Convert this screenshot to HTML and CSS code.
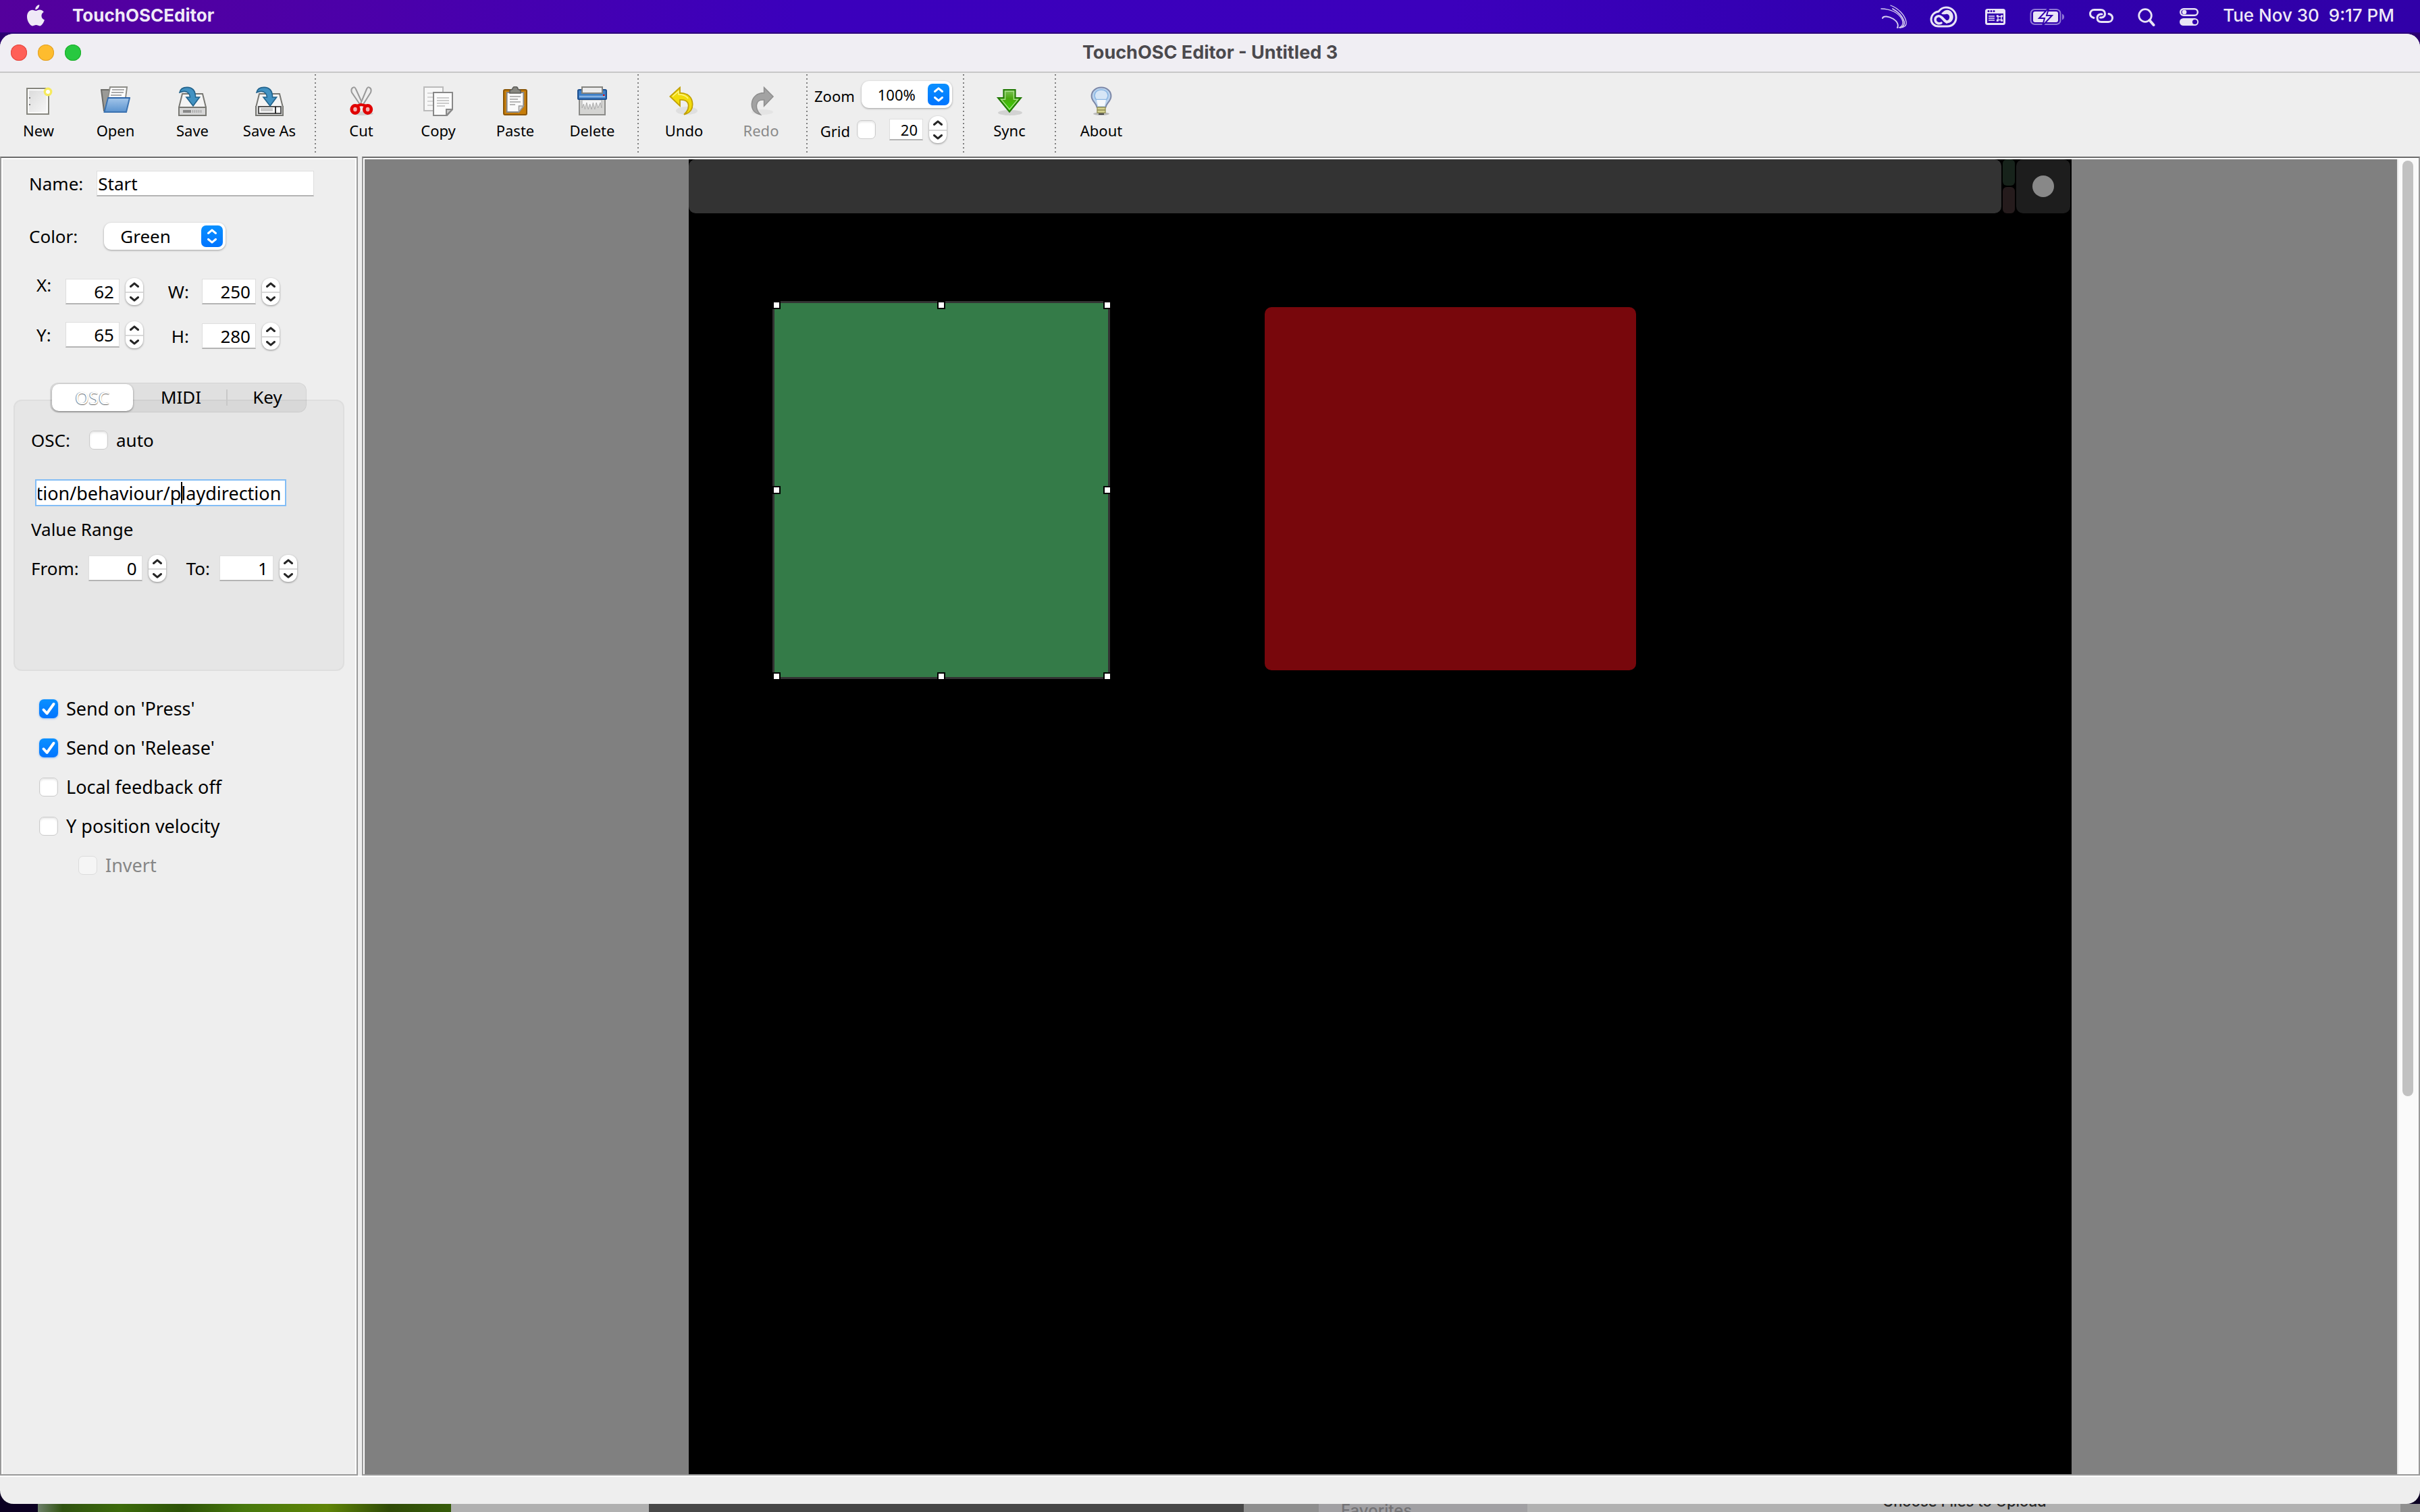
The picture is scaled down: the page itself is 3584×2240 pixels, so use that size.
FILE: index.html
```html
<!DOCTYPE html>
<html lang="en">

<head>
  <meta charset="UTF-8">
  <meta name="viewport" content="width=device-width, initial-scale=1.0">
  <title>TouchOSC Editor - Untitled 3</title>
  <link rel="stylesheet" href="styles.css">
</head>

<body>
  <svg class="defs">
    <symbol id="up" viewBox="0 0 14 8"><path d="M1.5 6.5L7 1.8l5.500 4.700" fill="none" stroke="currentColor" stroke-width="3" stroke-linecap="round" stroke-linejoin="round"/></symbol>
    <symbol id="down" viewBox="0 0 14 8"><path d="M1.500 1.500L7 6.200l5.500-4.700" fill="none" stroke="currentColor" stroke-width="3" stroke-linecap="round" stroke-linejoin="round"/></symbol>
    <linearGradient id="gBlue" x1="0" y1="0" x2="0" y2="1"><stop offset="0" stop-color="#a3c6ea"/><stop offset="1" stop-color="#5b93cf"/></linearGradient>
    <linearGradient id="gPage" x1="0" y1="0" x2="1" y2="1"><stop offset="0" stop-color="#dcdcdc"/><stop offset="1" stop-color="#f6f6f6"/></linearGradient>
    <linearGradient id="gGreen" x1="0" y1="0" x2="0" y2="1"><stop offset="0" stop-color="#7fc25a"/><stop offset=".4" stop-color="#49a80f"/><stop offset="1" stop-color="#35dc00"/></linearGradient>
  </svg>

  <!-- menu bar -->
  <header class="menubar">
    <svg class="apple" width="26" height="32" viewBox="0 0 26 32">
      <path fill="#efe9f7" d="M18.300 0c.2 3.800-2.900 7.200-6 7.300C12 3.800 15.200.4 18.300 0zM13.200 9c1.200 0 3-1.400 5.600-1.400 2.200 0 4.500 1.100 6 3.200-5 3-4.200 9.700 1.100 11.700-1.100 3.600-4 8.900-7 8.900-2 0-2.900-1.300-5.400-1.300s-3.400 1.300-5.300 1.300C4.700 31.400 0 24.500 0 17.800 0 11.300 4 7.700 7.800 7.700c2.400 0 4 1.300 5.400 1.300z"/>
    </svg>
    <strong class="app-name">TouchOSCEditor</strong>
    <div class="status">
      <svg class="swoosh" width="34" height="36" viewBox="0 0 34 36" fill="none" stroke="#d9d0f2" stroke-linecap="round">
        <path stroke-width="1.300" d="M0 6c14 0 26 6 31 16 2 5 1 10-5 12"/>
        <path stroke-width="1.300" d="M14 1c11 4 21 14 23 24 1 6-3 9-9 9"/>
        <path stroke-width="1.800" d="M17 6c9 5 15 12 17 19 1 5-2 8-6 9"/>
        <path stroke-width="2" d="M2 20c1-4 9-3 16 1 6 4 8 9 6 13"/>
      </svg>
      <svg width="48" height="36" viewBox="0 0 48 36" fill="none" stroke="#e9e4f6">
        <path stroke-width="3" d="M15 10C18 6 22 4 26 4c9 0 15 7 15 15 0 7-5 13-13 13H15C8 32 4 27 4 22c0-6 4-11 11-12z"/>
        <path fill="#e9e4f6" stroke="none" d="M19 13c4-5 8-6 11-5 9 3 9 17 0 19-4 1-7-1-9-4l-4-4c1-3 4-2 6 1 2 4 5 4 7 2 3-4 0-9-4-8-3 0-5 1-7-1z"/>
        <path stroke-width="3.500" stroke-linecap="round" d="M19 27c-4 2-9 0-9-5s6-7 10-3l7 7"/>
      </svg>
      <svg width="30" height="36" viewBox="0 0 30 36">
        <rect y="6" width="30" height="24" rx="3.500" fill="#e9e4f6"/>
        <g fill="#3200ae"><circle cx="5" cy="9.500" r="1.500"/><circle cx="9" cy="9.500" r="1.500"/><circle cx="13" cy="9.500" r="1.500"/><path d="M3 13h24v14H3z"/></g>
        <path d="M5 17h9M5 20h9M5 23h9" stroke="#e9e4f6" stroke-width="1.600"/>
        <path d="M19 17.500h5v5h-5zM19 17.500h-1.500V16H19zM24 17.500h1.500V16H24zM19 22.500h-1.500V24H19zM24 22.500h1.500V24H24z" fill="none" stroke="#e9e4f6" stroke-width="1.400"/>
      </svg>
      <svg width="52" height="36" viewBox="0 0 52 36">
        <rect x="1.500" y="7" width="44" height="22" rx="6" fill="none" stroke="#8f78d6" stroke-width="2"/>
        <path d="M48 13.500c4 1 4 8 0 9z" fill="#8f78d6"/>
        <rect x="5" y="10" width="37" height="16" rx="3" fill="#e9e4f6"/>
        <path d="M27 6L14 20h8l-3 11 14-15h-8l3-10z" fill="#e9e4f6" stroke="#3200ae" stroke-width="2"/>
      </svg>
      <svg width="36" height="36" viewBox="0 0 36 36" fill="none" stroke="#e9e4f6" stroke-width="3" stroke-linecap="round">
        <path d="M7 19.500C3 18.500 1.500 16 1.500 13.500c0-3.500 2.500-6 6-6H17c4 0 6.500 2.500 6.500 6 0 3-2 5-5 5.500h-2"/>
        <path d="M29 13.500c4 1 5.500 3.500 5.500 6 0 3.500-2.500 6-6 6H18c-4 0-6-2.500-6-6 0-3 2-5 5-5.500h2" />
      </svg>
      <svg width="26" height="36" viewBox="0 0 26 36" fill="none" stroke="#e9e4f6" stroke-linecap="round">
        <circle cx="11" cy="16" r="9.300" stroke-width="2.800"/><path d="M17.500 23l6 7" stroke-width="4"/>
      </svg>
      <svg width="28" height="36" viewBox="0 0 28 36">
        <rect x="1.200" y="6.200" width="25.600" height="9.600" rx="4.800" fill="none" stroke="#e9e4f6" stroke-width="2.400"/>
        <circle cx="7" cy="11" r="3.300" fill="#e9e4f6"/>
        <rect y="20" width="28" height="11" rx="5.500" fill="#e9e4f6"/><circle cx="22.500" cy="25.500" r="3.600" fill="#3200ae"/>
      </svg>
      <time class="clock">Tue Nov 30&nbsp; 9:17 PM</time>
    </div>
  </header>

  <main class="window">
    <div class="titlebar">
      <div class="lights">
        <button class="light red" aria-label="Close"></button>
        <button class="light yellow" aria-label="Minimize"></button>
        <button class="light green" aria-label="Zoom window"></button>
      </div>
      <h1 class="title">TouchOSC Editor - Untitled 3</h1>
    </div>

    <!-- toolbar -->
    <div class="toolbar">
      <button class="tool">
        <svg class="icon" viewBox="0 0 22 22"><path d="M2.500 1.500h16v19h-16z" fill="#fff" stroke="#86867e"/><path d="M4 3h13v16H4z" fill="url(#gPage)"/><path d="M4.500 8v1M4.500 13v1" stroke="#777"/><circle cx="18" cy="4" r="3.200" fill="#f6ea5e"/><circle cx="18" cy="4" r="1.500" fill="#fff"/></svg>
        New
      </button>
      <button class="tool">
        <svg class="icon" viewBox="0 0 22 22"><path d="M.5 2.500H6l1 1.500v14H2.500z" fill="#9a9a96" stroke="#6c6c68"/><path d="M7 .5h12.500l-1 8H5.500z" fill="#fff" stroke="#8d8d88"/><path d="M8.500 2.500h9M8 4.500h9M7.500 6.500h8" stroke="#aaa"/><path d="M5.500 8.500h16l-2.500 10.500H2.800z" fill="url(#gBlue)" stroke="#3b72b0"/><path d="M5.500 8.500h16" stroke="#2a63a8"/></svg>
        Open
      </button>
      <button class="tool">
        <svg class="icon" viewBox="0 0 22 22"><path d="M3.500 5.500h15l2.500 10v6H1v-6z" fill="#f4f4f4" stroke="#777772"/><path d="M1 15.500h20v6H1z" fill="#d6d6d6" stroke="#777772"/><path d="M4 18.500h6" stroke="#888" stroke-width="2"/><path d="M11 18.500h7.500" stroke="#999" stroke-width="2" stroke-dasharray=".6 .9"/><path d="M1.500 4.500C2 2 4 .7 7 .7c4 0 6.200 2.500 6.300 7.300h3L11.500 14.500 6.500 8h2.700C9 4.500 6 2.500 1.500 4.500z" fill="#4292c2" stroke="#22638c" stroke-width=".8"/></svg>
        Save
      </button>
      <button class="tool">
        <svg class="icon" viewBox="0 0 22 22"><path d="M3.500 5.500h15l2.500 10v6H1v-6z" fill="#f4f4f4" stroke="#777772"/><path d="M1 14.500v7h20v-7" fill="#ddd" stroke="#777772"/><path d="M3 15h16.500v5H3z" fill="#fff" stroke="#555"/><path d="M4.500 17.300h9" stroke="#c9c9c9" stroke-width="2.500"/><path d="M15.500 15v5" stroke="#000" stroke-width=".8"/><path d="M1.500 4.500C2 2 4 .7 7 .7c4 0 6.200 2.500 6.300 7.300h3L11.500 14.500 6.500 8h2.700C9 4.500 6 2.500 1.500 4.500z" fill="#4292c2" stroke="#22638c" stroke-width=".8"/></svg>
        Save As
      </button>
      <div class="separator"></div>
      <button class="tool">
        <svg class="icon" viewBox="0 0 22 22"><ellipse cx="12" cy="20" rx="8" ry="1.500" fill="#cfcfcf"/><path d="M5 .8C3.500 1.500 3.500 3 4 4.500L10.500 14h2L7 2C6.500.8 5.800.3 5 .8z" fill="#eee" stroke="#999"/><path d="M17 .8c1.500.7 1.500 2.200 1 3.700L12 14h-2L15 2c.5-1.200 1.200-1.700 2-1.200z" fill="#eee" stroke="#999"/><ellipse cx="6.500" cy="17" rx="2.600" ry="2.800" fill="#f3b0b0" stroke="#e00000" stroke-width="2.400"/><ellipse cx="15.800" cy="17" rx="2.600" ry="2.800" fill="#f3b0b0" stroke="#e00000" stroke-width="2.400"/><path d="M8 14.300L11 13.500l3.500.8" stroke="#e00000" stroke-width="2" fill="none"/></svg>
        Cut
      </button>
      <button class="tool">
        <svg class="icon" viewBox="0 0 22 22"><path d="M.5.500h14v17.500H.5z" fill="#f7f7f7" stroke="#bbb"/><path d="M3 5h9M3 8h9M3 11h9M3 14h9" stroke="#d5d5d5"/><path d="M7.500 4.500h14v12.500l-4 4.500H7.500z" fill="#fbfbfb" stroke="#888"/><path d="M10 8.500h9M10 10.500h9M10 12.500h9M10 14.500h6" stroke="#bcbcbc" stroke-width=".8"/><path d="M17 21.500V17h4.500z" fill="#ccc" stroke="#888"/></svg>
        Copy
      </button>
      <button class="tool">
        <svg class="icon" viewBox="0 0 22 22"><rect x="2.500" y="2.500" width="17" height="18.500" rx="1" fill="#c77d09" stroke="#8a5504"/><path d="M4.800 4.500h12.400v10l-3.500 4.500H4.800z" fill="#fafafa" stroke="#888"/><path d="M7 7.500h8M7 9.500h6M7 11.500h8M7 13.500h4" stroke="#a0a0a0" stroke-width=".8"/><path d="M13.700 19v-4.500h3.500z" fill="#ddd" stroke="#999" stroke-width=".7"/><path d="M7 5V3.500C7 2.500 8 2.300 9 2c0-2.300 4-2.300 4 0 1 .3 2 .5 2 1.500V5z" fill="#868680" stroke="#5c5c58" stroke-width=".8"/></svg>
        Paste
      </button>
      <button class="tool">
        <svg class="icon" viewBox="0 0 22 22"><path d="M1.500 9h19v12h-19z" fill="#d4d4d2" stroke="#8b8b88"/><path d="M3.500 10v6l1.200-3 1 4 1.200-5 1.200 5 1.200-4 1.200 4 1.200-5 1.200 5 1.200-5 1.200 4L17 12l1 4V10z" fill="#f6f6f6" stroke="#aaa" stroke-width=".5"/><rect x=".5" y="2.500" width="21" height="7" rx=".8" fill="#3f7fc6" stroke="#1d4f8e"/><path d="M1.500 7.500h19" stroke="#85b1e2" stroke-width="1.300"/><path d="M3.500.5h15v4.500h-15z" fill="#ececec" stroke="#83837f"/><path d="M19 6h1.200v1H19z" fill="#d00"/></svg>
        Delete
      </button>
      <div class="separator"></div>
      <button class="tool">
        <svg class="icon" viewBox="0 0 22 22"><ellipse cx="13" cy="18" rx="8" ry="3" fill="#dfdfdf"/><path d="M.7 7.500L8 .8v4c5.500 0 9 3 9.300 8 .2 4-2 7-6.300 8 3-2.500 3.500-4.500 3.300-7C14 11 12 9.800 8 10v4.500z" fill="#f2dc0c" stroke="#c2a105" stroke-width=".9"/><path d="M2.500 7.500L7 3.500V6c4 0 6 1.500 7 3" fill="none" stroke="#fff68a" stroke-width=".7"/></svg>
        Undo
      </button>
      <button class="tool" disabled>
        <svg class="icon" viewBox="0 0 22 22"><ellipse cx="12" cy="19" rx="8" ry="2" fill="#e4e4e4"/><path d="M20 7.500L13.300.8v4C8 4.800 4.500 8 4.200 12.800c-.2 4 2 7 6.300 8-2.500-2.500-3-4.500-2.800-7C8 11 9.500 9.800 13.300 10v4.500z" fill="#a3a3a3" stroke="#8f8f8f" stroke-width=".8"/></svg>
        Redo
      </button>
      <div class="separator"></div>
      <div class="view-options">
        <div class="option-row">
          <label for="zoom">Zoom</label>
          <div class="select small">
            <select id="zoom"><option>100%</option></select>
            <span class="knob"><svg><use href="#up"/></svg><svg><use href="#down"/></svg></span>
          </div>
        </div>
        <div class="option-row grid-row">
          <label for="grid">Grid</label>
          <input type="checkbox" id="grid">
          <div class="spinner small">
            <input type="number" value="20" aria-label="Grid size">
            <div class="steps"><button aria-label="Increase"><svg><use href="#up"/></svg></button><button aria-label="Decrease"><svg><use href="#down"/></svg></button></div>
          </div>
        </div>
      </div>
      <div class="separator"></div>
      <button class="tool">
        <svg class="icon" viewBox="0 0 22 22"><ellipse cx="11.500" cy="19.500" rx="9" ry="2" fill="#d2d2d2"/><path d="M6.700 2.500h8.600v6h4.200L11 18.800 2.500 8.500h4.200z" fill="url(#gGreen)" stroke="#227a04"/><path d="M7.800 3.600h6.400v6h3L11 17 4.800 9.600h3z" fill="none" stroke="#a5dd87" stroke-width=".7"/></svg>
        Sync
      </button>
      <div class="separator"></div>
      <button class="tool">
        <svg class="icon" viewBox="0 0 22 22"><ellipse cx="11" cy="20.300" rx="6" ry="1.200" fill="#bbb"/><path d="M11 .8c4.200 0 7.200 2.700 7.200 6.400 0 3.600-3.200 4.800-4 8.300H7.800c-.8-3.500-4-4.700-4-8.300C3.800 3.500 6.800.8 11 .8z" fill="#b9d3ee" stroke="#7c88a8"/><path d="M11 2.500c3 0 5 1.800 5 4.300 0 1.200-.5 2-1.200 3H7.200C6.500 8.800 6 8 6 6.800c0-2.500 2-4.300 5-4.300z" fill="#d6e6f6" stroke="#8db8e4" stroke-width=".8"/><path d="M7.500 10h7l-1 4.500h-5z" fill="#f4f8fc"/><path d="M8 15.500h6v4H8z" fill="#d7d492" stroke="#98955a" stroke-width=".7"/><path d="M8 17.500h6" stroke="#8c8950" stroke-width=".8"/><path d="M9 20h4v1H9z" fill="#444"/></svg>
        About
      </button>
    </div>

    <div class="panes">
      <!-- control properties -->
      <aside class="pane properties">
        <div class="field name-field">
          <label for="name">Name:</label>
          <input type="text" id="name" value="Start">
        </div>
        <div class="field color-field">
          <label for="color">Color:</label>
          <div class="select">
            <select id="color"><option>Green</option></select>
            <span class="knob"><svg><use href="#up"/></svg><svg><use href="#down"/></svg></span>
          </div>
        </div>

        <div class="geometry">
          <div class="geometry-col position">
            <div class="field">
              <label class="top" for="x">X:</label>
              <div class="spinner">
                <input type="number" id="x" value="62">
                <div class="steps"><button aria-label="Increase"><svg><use href="#up"/></svg></button><button aria-label="Decrease"><svg><use href="#down"/></svg></button></div>
              </div>
            </div>
            <div class="field">
              <label for="y">Y:</label>
              <div class="spinner">
                <input type="number" id="y" value="65">
                <div class="steps"><button aria-label="Increase"><svg><use href="#up"/></svg></button><button aria-label="Decrease"><svg><use href="#down"/></svg></button></div>
              </div>
            </div>
          </div>
          <div class="geometry-col size">
            <div class="field">
              <label for="w">W:</label>
              <div class="spinner">
                <input type="number" id="w" value="250">
                <div class="steps"><button aria-label="Increase"><svg><use href="#up"/></svg></button><button aria-label="Decrease"><svg><use href="#down"/></svg></button></div>
              </div>
            </div>
            <div class="field">
              <label for="h">H:</label>
              <div class="spinner">
                <input type="number" id="h" value="280">
                <div class="steps"><button aria-label="Increase"><svg><use href="#up"/></svg></button><button aria-label="Decrease"><svg><use href="#down"/></svg></button></div>
              </div>
            </div>
          </div>
        </div>

        <div class="tabs">
          <button class="tab active">OSC</button>
          <button class="tab">MIDI</button>
          <button class="tab">Key</button>
        </div>
        <section class="tab-panel">
          <div class="field osc-field">
            <span>OSC:</span>
            <label class="check"><input type="checkbox"> auto</label>
          </div>
          <div class="address-box">
            <input type="text" class="address" id="address" value="/composition/behaviour/playdirection" aria-label="OSC address">
            <i class="caret"></i>
          </div>
          <p class="range-title">Value Range</p>
          <div class="field range-field">
            <label for="from">From:</label>
            <div class="spinner">
              <input type="number" id="from" value="0">
              <div class="steps"><button aria-label="Increase"><svg><use href="#up"/></svg></button><button aria-label="Decrease"><svg><use href="#down"/></svg></button></div>
            </div>
            <label class="to" for="to">To:</label>
            <div class="spinner">
              <input type="number" id="to" value="1">
              <div class="steps"><button aria-label="Increase"><svg><use href="#up"/></svg></button><button aria-label="Decrease"><svg><use href="#down"/></svg></button></div>
            </div>
          </div>
        </section>

        <div class="checks">
          <label class="check"><input type="checkbox" checked> Send on 'Press'</label>
          <label class="check"><input type="checkbox" checked> Send on 'Release'</label>
          <label class="check"><input type="checkbox"> Local feedback off</label>
          <label class="check"><input type="checkbox"> Y position velocity</label>
          <label class="check nested"><input type="checkbox" disabled> Invert</label>
        </div>
      </aside>

      <!-- layout editor -->
      <section class="pane editor">
        <div class="stage">
          <div class="device">
            <div class="device-bar">
              <div class="page-tab"></div>
              <div class="leds"><i class="led"></i><i class="led rx"></i></div>
              <div class="device-menu"><i class="dot"></i></div>
            </div>
            <div class="device-page">
              <div class="control start">
                <i class="handle tl"></i><i class="handle tc"></i><i class="handle tr"></i>
                <i class="handle ml"></i><i class="handle mr"></i>
                <i class="handle bl"></i><i class="handle bc"></i><i class="handle br"></i>
              </div>
              <div class="control stop"></div>
            </div>
          </div>
        </div>
        <div class="scrollbar"><div class="thumb"></div></div>
      </section>
    </div>
    <footer class="statusbar"></footer>
  </main>

  <!-- windows behind -->
  <div class="behind">
    <div class="grass"></div>
    <div class="behind-light"></div>
    <div class="behind-dark"></div>
    <div class="behind-edge"></div>
    <div class="behind-side">Favorites</div>
    <div class="behind-dialog">Choose Files to Upload</div>
  </div>

  <script>
    // keep the end of the address in view
    var address = document.getElementById('address')
    address.scrollLeft = address.scrollWidth
  </script>
</body>

</html>
```

FILE: styles.css
```css
* {
  box-sizing: border-box;
}

body {
  margin: 0;
  height: 100vh;
  overflow: hidden;
  display: flex;
  flex-direction: column;
  background: linear-gradient(#2c0070, #0b0022);
  font-family: "Noto Sans", "Open Sans", sans-serif;
  font-size: 26px;
  line-height: 28px;
  color: #000;
}

button,
input,
select {
  margin: 0;
  padding: 0;
  border: 0;
  border-radius: 0;
  outline: 0;
  background: none;
  font: inherit;
  color: inherit;
  appearance: none;
}

.defs {
  position: absolute;
  width: 0;
  height: 0;
}

/* menu bar */
.menubar {
  flex: none;
  height: 50px;
  padding: 0 38px 2px 40px;
  display: flex;
  align-items: center;
  border-bottom: 2px solid #2b0079;
  background: linear-gradient(90deg, #54009c, #4b00aa 16%, #3b00bc 33%, #3c00bc 60%, #3000ae 80%, #3100a8);
  font-family: Inter, sans-serif;
  color: #efe9f7;
}

.app-name {
  margin-left: 41px;
  font-weight: 700;
}

.status {
  margin-left: auto;
  display: flex;
  align-items: center;
  gap: 36px;
}

.status svg {
  margin-top: 4px;
}

.status .swoosh {
  overflow: visible;
}

.clock {
  font-weight: 500;
}

/* window */
.window {
  flex: 1;
  min-height: 0;
  display: flex;
  flex-direction: column;
  border-radius: 20px;
  overflow: hidden;
  background: #eee;
}

.titlebar {
  flex: none;
  height: 58px;
  padding: 0 16px;
  display: grid;
  grid-template-columns: 1fr auto 1fr;
  align-items: center;
  border-bottom: 2px solid #c8c8c8;
  background: #f0eef3;
}

.lights {
  display: flex;
  gap: 16px;
}

.light {
  width: 24px;
  height: 24px;
  border-radius: 50%;
}

.red {
  background: #ff5f57;
  box-shadow: inset 0 0 0 1px #e2463f;
}

.yellow {
  background: #febc2e;
  box-shadow: inset 0 0 0 1px #e0a028;
}

.green {
  background: #28c840;
  box-shadow: inset 0 0 0 1px #1dad2b;
}

.title {
  margin: 0;
  font: 700 27px/28px Inter, sans-serif;
  color: #4b494d;
}

/* toolbar */
.toolbar {
  flex: none;
  height: 124px;
  display: flex;
  font-size: 22px;
}

.tool {
  width: 114px;
  padding-top: 20px;
  display: flex;
  flex-direction: column;
  align-items: center;
  gap: 7px;
  white-space: nowrap;
}

.tool:disabled {
  color: #8a8a8a;
}

.icon {
  width: 44px;
  height: 44px;
}

.separator {
  width: 2px;
  margin: 2px 10px 4px;
  background: repeating-linear-gradient(#7e7e7e 0 2px, transparent 2px 6px);
}

.view-options {
  width: 210px;
  padding: 12px 6px 0 0;
  display: flex;
  flex-direction: column;
  gap: 12px;
}

.option-row {
  height: 40px;
  display: flex;
  align-items: center;
  justify-content: flex-end;
  gap: 10px;
}

.option-row label {
  padding-top: 4px;
}

.grid-row {
  padding-right: 8px;
}

.grid-row .spinner {
  margin-left: 10px;
}

/* form controls */
.select {
  position: relative;
  width: 180px;
  height: 40px;
  border-radius: 11px;
  background: #fff;
  box-shadow: 0 1px 3px rgba(0, 0, 0, .35);
}

.select select {
  width: 100%;
  height: 100%;
  padding-left: 24px;
}

.select.small {
  width: 140px;
}

.knob {
  position: absolute;
  top: 4px;
  right: 4px;
  width: 32px;
  height: 32px;
  padding: 5px 0;
  display: flex;
  flex-direction: column;
  align-items: center;
  justify-content: space-between;
  border-radius: 7px;
  background: linear-gradient(#0a90ff, #0074ff);
  color: #fff;
  pointer-events: none;
}

.knob svg,
.steps svg {
  display: block;
  width: 14px;
  height: 8px;
}

input[type="text"],
input[type="number"] {
  height: 38px;
  border: 1px solid #dedede;
  border-bottom: 2px solid #b4b4b4;
  background: #fff;
}

input[type="number"] {
  width: 80px;
  padding-right: 7px;
  text-align: right;
  appearance: textfield;
}

input::-webkit-inner-spin-button {
  appearance: none;
  margin: 0;
}

.spinner {
  display: flex;
  align-items: center;
  gap: 9px;
}

.spinner.small input {
  width: 50px;
  height: 32px;
}

.steps {
  width: 26px;
  height: 40px;
  border-radius: 12px;
  background: #fff;
  box-shadow: 0 1px 3px rgba(0, 0, 0, .4);
  color: #262626;
}

.steps button {
  width: 26px;
  height: 20px;
  display: flex;
  align-items: center;
  justify-content: center;
}

.steps button + button {
  border-top: 2px solid #d8d8d8;
}

input[type="checkbox"] {
  flex: none;
  width: 28px;
  height: 28px;
  border: 1px solid #cbcbcb;
  border-radius: 7px;
  background: #fff;
  box-shadow: inset 0 2px 3px rgba(0, 0, 0, .1);
}

input[type="checkbox"]:checked {
  border: 0;
  background: url("data:image/svg+xml,%3Csvg xmlns='http://www.w3.org/2000/svg' viewBox='0 0 28 28'%3E%3Cpath d='M6.500 15.500l5 5.500L21.500 7' fill='none' stroke='white' stroke-width='4' stroke-linecap='round' stroke-linejoin='round'/%3E%3C/svg%3E"), linear-gradient(#0a90ff, #0074ff);
  box-shadow: 0 1px 3px rgba(0, 116, 255, .4);
}

input[type="checkbox"]:disabled {
  border-color: #dcdcdc;
  background: #f5f5f5;
  box-shadow: none;
}

.check {
  display: flex;
  align-items: center;
  gap: 12px;
}

.field {
  display: flex;
  align-items: center;
}

/* panes */
.panes {
  flex: 1;
  min-height: 0;
  display: flex;
  gap: 6px;
}

.pane {
  border: 2px solid #999;
  border-top-color: #6b6b6b;
  box-shadow: inset 2px 2px #fff, inset -2px 0 #fff;
}

.properties {
  flex: none;
  width: 530px;
  padding: 18px;
  display: flex;
  flex-direction: column;
}

.name-field {
  height: 40px;
  margin: 0 45px 0 23px;
  gap: 20px;
}

.name-field input {
  flex: 1;
  min-width: 0;
  padding-left: 1px;
}

.color-field {
  height: 40px;
  margin: 38px 0 0 23px;
  gap: 39px;
}

.geometry {
  margin: 42px 0 0 34px;
  display: flex;
  gap: 36px;
}

.geometry-col {
  display: flex;
  flex-direction: column;
}

.position {
  gap: 24px;
}

.position label {
  width: 43px;
}

.size {
  gap: 26px;
}

.size label {
  width: 32px;
  margin-right: 19px;
  text-align: right;
}

.top {
  align-self: flex-start;
  line-height: 20px;
}

.tabs {
  position: relative;
  z-index: 1;
  align-self: flex-start;
  width: 380px;
  height: 44px;
  margin: 49px 0 0 54px;
  padding: 2px;
  display: flex;
  align-items: center;
  border: 1px solid rgba(0, 0, 0, .06);
  border-radius: 12px;
  background: rgba(0, 0, 0, .06);
}

.tab {
  flex: 1;
  height: 40px;
  padding: 0 0 2px 4px;
}

.tab.active {
  flex: none;
  width: 120px;
  padding: 0;
  border-radius: 10px;
  background: #fff;
  box-shadow: 0 1px 3px rgba(0, 0, 0, .45);
  color: #fff;
  text-shadow: 0 1px 1px #666, -1px 0 1px #999;
}

.tab:last-child {
  flex: none;
  width: 116px;
  height: 24px;
  line-height: 22px;
  border-left: 2px solid #c9c9c9;
}

.tab-panel {
  height: 402px;
  margin-top: -19px;
  padding: 44px 24px;
  border: 2px solid #dedede;
  border-radius: 12px;
  background: #e6e6e6;
}

.osc-field {
  gap: 28px;
}

.address-box {
  position: relative;
  width: 372px;
  margin: 44px 0 0 6px;
}

.address-box .address {
  display: block;
  width: 100%;
  height: 40px;
  padding: 0 6px 0 2px;
  border: 2px solid #83bdf5;
  font-size: 27px;
}

.caret {
  position: absolute;
  top: 4px;
  left: 216px;
  width: 2px;
  height: 32px;
  background: #000;
}

.range-title {
  margin: 20px 0 24px;
}

.range-field {
  justify-content: space-between;
  width: 394px;
}

.range-field .to {
  margin-left: 16px;
}

.checks {
  margin: 42px 0 0 38px;
  display: flex;
  flex-direction: column;
  gap: 30px;
  font-size: 27px;
}

.nested {
  margin-left: 58px;
  color: #868686;
}

/* editor */
.editor {
  flex: 1;
  min-width: 0;
  padding: 2px 0 0 2px;
  display: flex;
}

.stage {
  flex: 1;
  display: flex;
  justify-content: center;
  padding-right: 2px;
  background: #808080;
}

.device {
  width: 2048px;
  background: #000;
}

.device-bar {
  height: 80px;
  padding-right: 2px;
  display: flex;
  gap: 2px;
}

.page-tab {
  flex: 1;
  border-radius: 10px;
  background: #333;
}

.leds {
  width: 18px;
  display: flex;
  flex-direction: column;
  gap: 2px;
}

.led {
  flex: 1;
  border-radius: 6px;
  background: #17231b;
}

.rx {
  background: #251b1c;
}

.device-menu {
  width: 80px;
  display: flex;
  align-items: center;
  justify-content: center;
  border-radius: 10px;
  background: #1d1d1d;
}

.dot {
  width: 32px;
  height: 32px;
  border-radius: 50%;
  background: #888;
}

.device-page {
  position: relative;
}

.control {
  position: absolute;
  overflow: hidden;
}

.start {
  left: 124px;
  top: 130px;
  width: 500px;
  height: 560px;
  background: #347b48;
  box-shadow: inset 0 0 0 3px #333;
}

.stop {
  left: 853px;
  top: 139px;
  width: 550px;
  height: 538px;
  border-radius: 10px;
  background: #78070c;
}

.handle {
  position: absolute;
  width: 12px;
  height: 12px;
  border: 2px solid #000;
  background: #fff;
}

.tl, .tc, .tr {
  top: 0;
}

.ml, .mr {
  top: 274px;
}

.bl, .bc, .br {
  top: 550px;
}

.tl, .ml, .bl {
  left: 0;
}

.tc, .bc {
  left: 244px;
}

.tr, .mr, .br {
  left: 490px;
}

.scrollbar {
  width: 32px;
  padding: 2px 8px 0 6px;
  border-left: 2px solid #e8e8e8;
  background: #fafafa;
}

.thumb {
  height: 1386px;
  border-radius: 8px;
  background: #c1c1c1;
}

.statusbar {
  flex: none;
  height: 42px;
  border-top: 2px solid #fff;
}

/* windows behind */
.behind {
  flex: none;
  height: 12px;
  padding-left: 56px;
  overflow: hidden;
  display: flex;
  background: #0b0022;
  font: 500 24px/20px Inter, sans-serif;
}

.grass {
  width: 612px;
  background: linear-gradient(90deg, #6d7f6a, #2f5210 6%, #3c6a0a 20%, #2c5206 35%, #47780c 50%, #5f8406 70%, #2f4a06 85%, #365c0a);
}

.behind-light {
  width: 293px;
  background: #b0b0b0;
}

.behind-dark {
  width: 881px;
  background: #474747;
}

.behind-edge {
  width: 111px;
  background: #8e8e8e;
}

.behind-side {
  width: 309px;
  padding-left: 33px;
  background: #a1a0a3;
  color: #737275;
}

.behind-dialog {
  flex: 1;
  margin-top: -4px;
  padding-left: 526px;
  border-right: 29px solid #8f8f8f;
  background: #b1b1b1;
  font-size: 22px;
  line-height: 0;
  color: #262626;
}
```
